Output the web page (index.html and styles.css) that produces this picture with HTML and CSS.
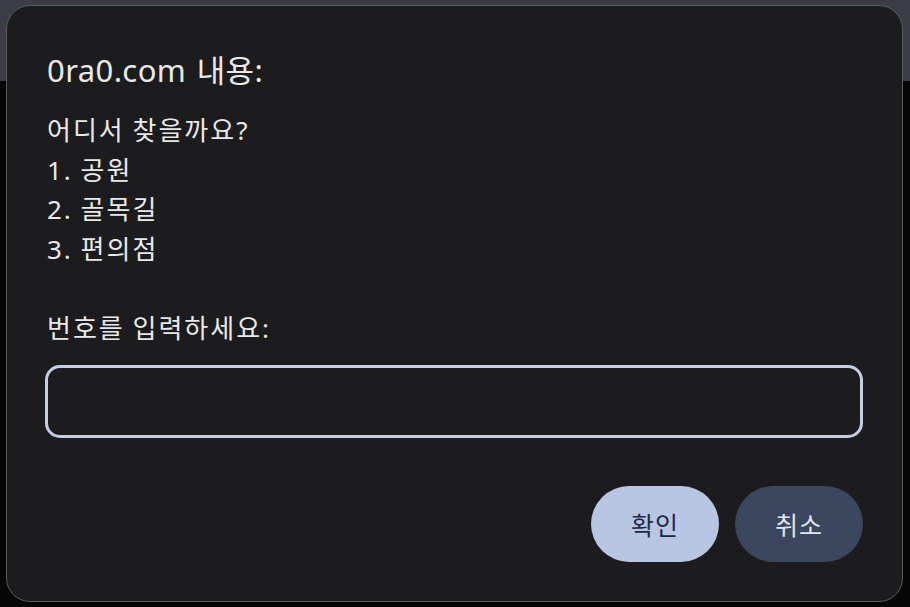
FILE: index.html
```html
<!DOCTYPE html>
<html lang="ko">
<head>
<meta charset="utf-8">
<title>0ra0.com 내용</title>
<link rel="stylesheet" href="styles.css">
</head>
<body>
<div class="page">
  <div class="topbar"></div>
  <div class="content"></div>
</div>
<div class="dialog">
  <div class="title">0ra0.com 내용:</div>
  <div class="message">
    <div class="line">어디서 찾을까요?</div>
    <div class="line">1. 공원</div>
    <div class="line">2. 골목길</div>
    <div class="line">3. 편의점</div>
    <div class="line">&nbsp;</div>
    <div class="line">번호를 입력하세요:</div>
  </div>
  <div class="input"></div>
  <div class="actions">
    <div class="btn primary">확인</div>
    <div class="btn secondary">취소</div>
  </div>
</div>
</body>
</html>
```

FILE: styles.css
```css
html, body {
  margin: 0;
  padding: 0;
  width: 910px;
  height: 607px;
  overflow: hidden;
  background: #050505;
  font-family: "Noto Sans", "Noto Sans CJK KR", sans-serif;
}
.page {
  display: flex;
  flex-direction: column;
  height: 607px;
}
.topbar {
  height: 81px;
  background: #3a3c46;
}
.content {
  flex: 1;
  background: #060606;
}
.dialog {
  position: absolute;
  left: 6px;
  top: 5px;
  width: 897px;
  height: 597px;
  box-sizing: border-box;
  border: 1px solid #5b5c60;
  border-radius: 24px;
  background: #1c1c1e;
  padding: 46px 39px 39px 38px;
  display: flex;
  flex-direction: column;
  color: #e9e9eb;
}
.title {
  font-size: 31px;
  line-height: 36px;
  height: 36px;
  letter-spacing: 0.4px;
  word-spacing: 2px;
  padding-left: 2px;
}
.message {
  margin-top: 23px;
  font-size: 26px;
  letter-spacing: 2px;
  word-spacing: -1px;
  padding-left: 2px;
}
.line {
  line-height: 39.6px;
  height: 39.6px;
  white-space: pre;
}
.input {
  margin-top: 16px;
  height: 73px;
  box-sizing: border-box;
  border: 3px solid #c3cde6;
  border-radius: 15px;
}
.actions {
  margin-top: 48px;
  display: flex;
  justify-content: flex-end;
  gap: 16px;
}
.btn {
  width: 128px;
  height: 76px;
  border-radius: 38px;
  display: flex;
  align-items: center;
  justify-content: center;
  font-size: 25px;
  letter-spacing: 1px;
}
.primary {
  background: #b9c6e3;
  color: #1d2944;
}
.secondary {
  background: #3b475f;
  color: #e2e6f0;
}
```
